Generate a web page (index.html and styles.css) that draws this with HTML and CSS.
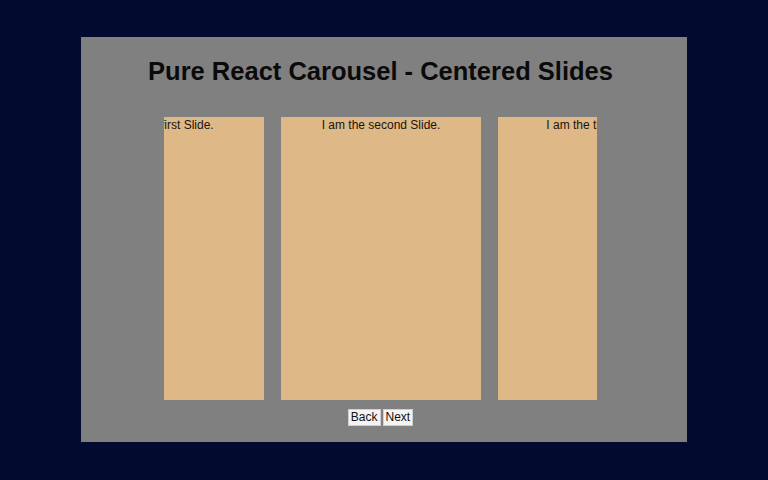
FILE: index.html
```html
<!DOCTYPE html>
<html>
<head>
  <title>Pure React Carousel - Centered Slides</title>
  <link rel="stylesheet" href="styles.css">
</head>
<body>
  <div class="page">
    <div class="demo">
      <h1 class="demo-title">Pure React Carousel - Centered Slides</h1>

      <div class="carousel">
        <div class="slider">
          <div class="slider-tray">
            <div class="slide">I am the first Slide.</div>
            <div class="slide">I am the second Slide.</div>
            <div class="slide">I am the third Slide.</div>
          </div>
        </div>
        <div class="controls">
          <button class="ctrl-btn">Back</button>
          <button class="ctrl-btn">Next</button>
        </div>
      </div>
    </div>
  </div>
</body>
</html>
```

FILE: styles.css
```css
body {
  margin: 0;
  background-color: #030a30;
  font-family: "Liberation Sans", Arial, sans-serif;
}

.page {
  padding: 37px 81px 38px;
}

.demo {
  background-color: #808080;
  padding: 19px 7px 16px 0;
}

.demo-title {
  margin: 0;
  font-size: 25.5px;
  line-height: 30px;
  font-weight: bold;
  text-align: center;
  color: #0a0a0a;
}

.carousel {
  width: 433px;
  margin: 31px auto 0;
}

.slider {
  overflow: hidden;
}

/* tray shifted so the active slide sits in the middle */
.slider-tray {
  display: flex;
  gap: 17px;
  transform: translateX(-100px);
}

.slide {
  flex: 0 0 200px;
  height: 282px;
  padding-top: 1px;
  background-color: #deb887;
  font-size: 12px;
  line-height: 14px;
  text-align: center;
  color: #1a1410;
}

.controls {
  display: flex;
  justify-content: center;
  gap: 2px;
  margin-top: 9px;
}

.ctrl-btn {
  font-family: "Liberation Sans", Arial, sans-serif;
  font-size: 12px;
  line-height: 13px;
  padding: 1px 2px;
  background-color: #f4f4f4;
  border: 1px solid #d0d0d0;
  border-radius: 0;
  color: #111;
}
```
